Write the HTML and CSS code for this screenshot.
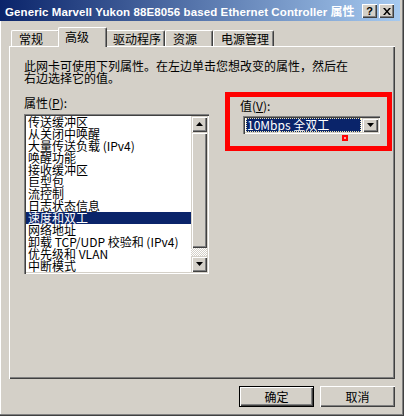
FILE: index.html
```html
<!DOCTYPE html>
<html lang="zh-CN">
<head>
    <meta charset="UTF-8">
    <title>Generic Marvell Yukon 88E8056 based Ethernet Controller 属性</title>
    <link rel="stylesheet" href="styles.css">
</head>
<body>

    <div class="window">

        <!-- Title bar -->
        <div class="titlebar">
            <span class="title">Generic Marvell Yukon 88E8056 based Ethernet Controller <span class="title-cjk">属性</span></span>
            <div class="caption-btns">
                <span class="cap-btn help">?</span>
                <span class="cap-btn close">
                    <svg width="8" height="7" viewBox="0 0 8 7"><path d="M0 0h2l2 2.4L6 0h2L5 3.5 8 7H6L4 4.6 2 7H0l3-3.5z" fill="#000"/></svg>
                </span>
            </div>
        </div>

        <!-- Tabs -->
        <div class="tabs">
            <div class="tab tab-general">常规</div>
            <div class="tab tab-advanced active">高级</div>
            <div class="tab tab-driver">驱动程序</div>
            <div class="tab tab-resources">资源</div>
            <div class="tab tab-power">电源管理</div>
        </div>

        <!-- Advanced page -->
        <div class="panel">
            <p class="desc">此网卡可使用下列属性。在左边单击您想改变的属性，然后在<br>右边选择它的值。</p>

            <div class="columns">
                <div class="prop-col">
                    <div class="label">属性(<u>P</u>):</div>
                    <div class="listbox">
                        <ul class="items">
                            <li>传送缓冲区</li>
                            <li>从关闭中唤醒</li>
                            <li>大量传送负载 (IPv4)</li>
                            <li>唤醒功能</li>
                            <li>接收缓冲区</li>
                            <li>巨型包</li>
                            <li>流控制</li>
                            <li>日志状态信息</li>
                            <li class="selected">速度和双工</li>
                            <li>网络地址</li>
                            <li>卸载 TCP/UDP 校验和 (IPv4)</li>
                            <li>优先级和 VLAN</li>
                            <li>中断模式</li>
                        </ul>
                        <div class="vscroll">
                            <span class="sb-btn">
                                <svg width="7" height="4" viewBox="0 0 7 4"><path d="M3.5 0L7 4H0z" fill="#000"/></svg>
                            </span>
                            <span class="sb-thumb"></span>
                            <span class="sb-track"></span>
                            <span class="sb-btn">
                                <svg width="7" height="4" viewBox="0 0 7 4"><path d="M0 0h7L3.5 4z" fill="#000"/></svg>
                            </span>
                        </div>
                    </div>
                </div>

                <div class="value-box">
                    <div class="label">值(<u>V</u>):</div>
                    <div class="combo">
                        <span class="combo-value">10Mbps 全双工</span>
                        <span class="combo-btn">
                            <svg width="7" height="4" viewBox="0 0 7 4"><path d="M0 0h7L3.5 4z" fill="#000"/></svg>
                        </span>
                    </div>
                    <span class="marker"></span>
                </div>
            </div>
        </div>

        <!-- Dialog buttons -->
        <div class="buttons">
            <button class="btn default">确定</button>
            <button class="btn">取消</button>
        </div>
    </div>

</body>
</html>
```

FILE: styles.css
```css
body {
    margin: 0;
    background: #d4d0c8;
    font-family: "Noto Sans CJK SC", sans-serif;
    font-size: 12px;
    color: #000;
}

/* Window frame */
.window {
    width: 404px;
    height: 416px;
    box-sizing: border-box;
    padding-right: 4px;
    display: flex;
    flex-direction: column;
    box-shadow: inset -1px -1px #404040, inset -2px -2px #808080, inset 1px 0 #fff;
}

.titlebar {
    height: 21px;
    flex-shrink: 0;
    display: flex;
    align-items: center;
    justify-content: space-between;
    padding: 0 6px 0 5px;
    background: linear-gradient(to right, #0a246a, #a6caf0);
    color: #fff;
}

    .titlebar .title {
        font-family: "Liberation Sans", Arial, sans-serif;
        font-weight: bold;
        font-size: 11.5px;
        letter-spacing: 0.1px;
        white-space: nowrap;
    }

    .titlebar .title-cjk {
        font-family: "Noto Sans CJK SC", sans-serif;
        font-size: 12px;
        letter-spacing: 0;
    }

.caption-btns {
    display: flex;
    gap: 2px;
    margin-top: 1px;
}

.cap-btn {
    width: 15px;
    height: 14px;
    box-sizing: border-box;
    display: flex;
    align-items: center;
    justify-content: center;
    background: #d4d0c8;
    color: #000;
    font-family: "Liberation Sans", Arial, sans-serif;
    font-weight: bold;
    font-size: 11px;
    box-shadow: inset 1px 1px #fff, inset -1px -1px #404040, inset -2px -2px #808080;
}

/* Tabs */
.tabs {
    display: flex;
    align-items: flex-end;
    height: 19px;
    margin: 6px 0 0 11px;
    flex-shrink: 0;
}

.tab {
    height: 16px;
    box-sizing: border-box;
    padding-left: 7px;
    line-height: 15px;
    white-space: nowrap;
    border-top: 1px solid #fff;
    border-left: 1px solid #fff;
    border-right: 1px solid #404040;
    border-radius: 2px 2px 0 0;
    box-shadow: inset -1px 0 #808080;
    background: #d4d0c8;
}

    .tab.active {
        position: relative;
        z-index: 1;
        height: 20px;
        margin: 0 -2px -1px;
        padding-left: 6px;
        line-height: 17px;
    }

.tab-general { width: 49px; }
.tab-advanced { width: 49px; }
.tab-driver { width: 60px; }
.tab-resources { width: 48px; }
.tab-power { width: 61px; }

/* Page */
.panel {
    width: 386px;
    height: 333px;
    margin-left: 9px;
    box-sizing: border-box;
    padding: 13px 0 0 14px;
    border-top: 1px solid #fff;
    border-left: 1px solid #fff;
    box-shadow: inset -1px -1px #404040, inset -2px -2px #808080;
}

.desc {
    margin: 0;
    line-height: 12px;
    white-space: nowrap;
}

.columns {
    display: flex;
    align-items: flex-start;
    margin-top: 8px;
}

.label {
    line-height: 12px;
}

.prop-col .label {
    margin: 5px 0 5px;
}

.listbox {
    width: 185px;
    height: 160px;
    box-sizing: border-box;
    padding: 2px;
    display: flex;
    background: #fff;
    box-shadow: inset 1px 1px #808080, inset 2px 2px #404040, inset -1px -1px #fff, inset -2px -2px #d4d0c8;
}

.items {
    flex: 1;
    margin: 0;
    padding: 0;
    list-style: none;
    overflow: hidden;
}

    .items li {
        height: 12px;
        line-height: 12px;
        padding-left: 2px;
        white-space: nowrap;
    }

        .items li.selected {
            background: #0a246a;
            color: #fff;
        }

.vscroll {
    width: 16px;
    display: flex;
    flex-direction: column;
}

.sb-btn, .combo-btn {
    display: flex;
    align-items: center;
    justify-content: center;
    background: #d4d0c8;
    box-shadow: inset 1px 1px #d4d0c8, inset 2px 2px #fff, inset -1px -1px #404040, inset -2px -2px #808080;
}

.sb-btn {
    height: 16px;
}

.sb-thumb {
    flex: 1;
    background: #d4d0c8;
    box-shadow: inset 1px 1px #d4d0c8, inset 2px 2px #fff, inset -1px -1px #404040, inset -2px -2px #808080;
}

.sb-track {
    height: 8px;
    background: repeating-conic-gradient(#fff 0 25%, #d4d0c8 0 50%) 0 0 / 2px 2px;
}

/* Value box with the red highlight */
.value-box {
    position: relative;
    width: 167px;
    height: 59px;
    margin-left: 16px;
    box-sizing: border-box;
    padding: 3px 0 0 10px;
    border: 5px solid #ff0000;
}

.combo {
    display: flex;
    width: 137px;
    height: 18px;
    margin: 4px 0 0 3px;
    box-sizing: border-box;
    padding: 2px;
    background: #fff;
    box-shadow: inset 1px 1px #808080, inset 2px 2px #404040, inset -1px -1px #fff, inset -2px -2px #d4d0c8;
}

.combo-value {
    flex: 1;
    margin: 0 1px;
    padding-left: 1px;
    line-height: 14px;
    background: #0a246a;
    color: #fff;
    white-space: nowrap;
    outline: 1px dotted #f0e6b0;
    outline-offset: -1px;
}

.combo-btn {
    width: 16px;
}

.marker {
    position: absolute;
    left: 112px;
    top: 38px;
    width: 6px;
    height: 6px;
    box-sizing: border-box;
    background: #ff9c9c;
    border: 2px solid #ff0000;
}

/* Dialog buttons */
.buttons {
    display: flex;
    justify-content: flex-end;
    gap: 6px;
    margin-top: 7px;
    padding-right: 5px;
}

.btn {
    width: 75px;
    height: 21px;
    padding: 0;
    border: none;
    background: #d4d0c8;
    font-family: "Noto Sans CJK SC", sans-serif;
    font-size: 12px;
    color: #000;
    box-shadow: inset 1px 1px #fff, inset -1px -1px #404040, inset -2px -2px #808080;
}

    .btn.default {
        border: 1px solid #000;
    }
```
